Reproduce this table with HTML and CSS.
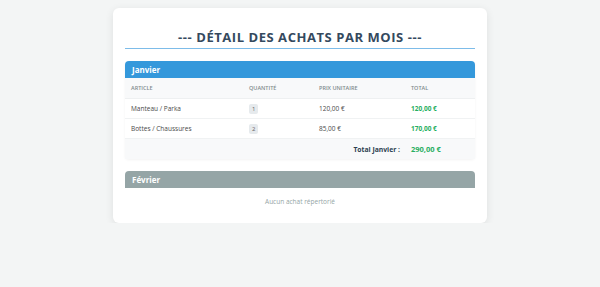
FILE: index.html
```html
<!DOCTYPE html>
<html lang="fr">
<head>
<meta charset="utf-8">
<title>Détail des achats par mois</title>
<link rel="stylesheet" href="styles.css">
</head>
<body>
<div class="card">
  <h2 class="title">--- DÉTAIL DES ACHATS PAR MOIS ---</h2>
  <section class="month">
    <div class="month-head blue">Janvier</div>
    <table class="items">
      <colgroup><col class="c1"><col class="c2"><col class="c3"><col class="c4"></colgroup>
      <thead>
        <tr><th>Article</th><th>Quantité</th><th>Prix unitaire</th><th>Total</th></tr>
      </thead>
      <tbody>
        <tr><td>Manteau / Parka</td><td><span class="qty">1</span></td><td>120,00 €</td><td class="amt">120,00 €</td></tr>
        <tr><td>Bottes / Chaussures</td><td><span class="qty">2</span></td><td>85,00 €</td><td class="amt">170,00 €</td></tr>
        <tr class="sum"><td colspan="3" class="sum-label">Total Janvier :</td><td class="amt">290,00 €</td></tr>
      </tbody>
    </table>
  </section>
  <section class="month">
    <div class="month-head grey">Février</div>
    <p class="empty">Aucun achat répertorié</p>
  </section>
</div>
</body>
</html>
```
FILE: styles.css
```css
html, body {
  margin: 0;
  padding: 0;
}
body {
  background: #f3f5f5;
  font-family: "Open Sans", "DejaVu Sans", sans-serif;
  padding-top: 8px;
}
.card {
  width: 350px;
  margin: 0 auto;
  background: #fff;
  border-radius: 6px;
  box-shadow: 0 2px 8px rgba(0, 0, 0, 0.09);
  padding: 20px 12px 10px;
}
.title {
  margin: 0 0 12px;
  text-align: center;
  font-size: 13px;
  line-height: 18px;
  font-weight: 700;
  letter-spacing: 0.55px;
  color: #34495e;
  padding-bottom: 2px;
  border-bottom: 1px solid #7dbce9;
}
.month {
  margin-bottom: 12px;
  border-radius: 4px;
  box-shadow: 0 1px 3px rgba(0, 0, 0, 0.05);
}
.month:last-child {
  margin-bottom: 0;
  box-shadow: none;
}
.month-head {
  color: #fff;
  font-size: 8px;
  font-weight: 700;
  line-height: 11px;
  padding: 3px 7px;
  border-radius: 4px 4px 0 0;
}
.blue { background: #3498db; }
.grey { background: #95a5a6; }
.items {
  width: 100%;
  border-collapse: collapse;
  table-layout: fixed;
}
.c1 { width: 118px; }
.c2 { width: 70px; }
.c3 { width: 92px; }
.c4 { width: 70px; }
.items th {
  background: #f8f9fa;
  text-align: left;
  font-size: 5.5px;
  font-weight: 600;
  color: #808b8d;
  text-transform: uppercase;
  height: 20px;
  padding: 0 6px;
  border-bottom: 1px solid #eef0f1;
}
.items td {
  font-size: 6.5px;
  color: #4a4a4a;
  height: 19px;
  padding: 0 6px;
  border-bottom: 1px solid #f0f2f3;
}
.qty {
  display: inline-block;
  background: #e6eaed;
  color: #666;
  font-size: 6px;
  line-height: 10px;
  padding: 0 3px;
  border-radius: 2px;
}
.items td.amt {
  color: #27ae60;
  font-weight: 700;
}
.sum td {
  background: #f8f9fa;
  border-bottom: none;
  height: 20px;
}
.items td.sum-label {
  text-align: right;
  padding-right: 5px;
  font-weight: 700;
  font-size: 6.8px;
  color: #2c3e50;
}
.sum td.amt {
  font-size: 7.5px;
}
.empty {
  margin: 0;
  text-align: center;
  font-size: 6.5px;
  color: #95a5a6;
  padding: 9px 0 7px;
}
```
